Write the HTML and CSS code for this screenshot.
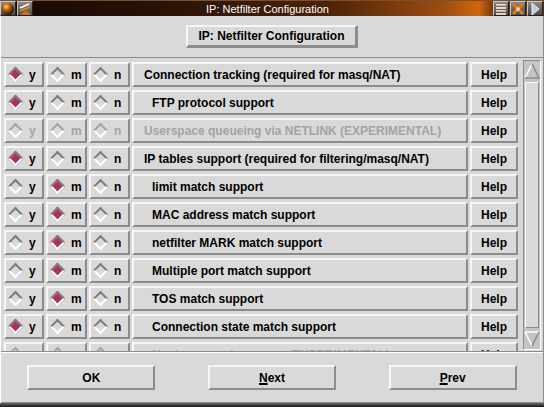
FILE: index.html
```html
<!DOCTYPE html>
<html lang="en">
<head>
  <meta charset="UTF-8" />
  <title>IP: Netfilter Configuration</title>
  <link rel="stylesheet" href="styles.css">
</head>
<body>
  <div class="window">
    <div class="titlebar">
      <span class="tb-btn">
        <svg width="14" height="14" viewBox="0 0 14 14">
          <defs>
            <radialGradient id="ball" cx="0.35" cy="0.3" r="0.7">
              <stop offset="0" stop-color="#ffd27a"/>
              <stop offset="0.35" stop-color="#d07010"/>
              <stop offset="1" stop-color="#2a1004"/>
            </radialGradient>
          </defs>
          <circle cx="7" cy="7" r="6" fill="url(#ball)"/>
        </svg>
      </span>
      <span class="tb-btn">
        <svg width="14" height="14" viewBox="0 0 14 14">
          <path d="M2 6 L11 2" stroke="#fff" stroke-width="1.5"/>
          <path d="M2 9 L12 5" stroke="#e08a20" stroke-width="1.5"/>
          <path d="M2 13 L8 8 L13 13 Z" fill="#d07010"/>
        </svg>
      </span>
      <span class="tb-title">IP: Netfilter Configuration</span>
      <span class="tb-btn">
        <svg width="14" height="14" viewBox="0 0 14 14">
          <path d="M2 3 H12 M2 6 H12 M2 9 H12 M2 12 H12" stroke="#fff" stroke-width="1.4"/>
          <path d="M2 4 H12 M2 10 H12" stroke="#c06010" stroke-width="0.8"/>
        </svg>
      </span>
      <span class="tb-btn">
        <svg width="14" height="14" viewBox="0 0 14 14">
          <path d="M2 2 L12 12 M12 2 L2 12" stroke="#e07818" stroke-width="3"/>
          <circle cx="7" cy="7" r="2" fill="#ffd080"/>
        </svg>
      </span>
      <span class="tb-btn">
        <svg width="14" height="14" viewBox="0 0 14 14">
          <path d="M4 1 L11 7 L4 13 Z" fill="#c8c8c8" stroke="#f4f4f4" stroke-width="1"/>
        </svg>
      </span>
    </div>

    <div class="client">
      <div class="header">
        <div class="tk-btn header-btn">IP: Netfilter Configuration</div>
      </div>

      <div class="list-area">
        <div class="rows">
          <div class="row">
            <div class="tk-btn radio"><span class="ind on"></span>y</div>
            <div class="tk-btn radio"><span class="ind"></span>m</div>
            <div class="tk-btn radio"><span class="ind"></span>n</div>
            <div class="tk-btn label">Connection tracking (required for masq/NAT)</div>
            <div class="tk-btn help">Help</div>
          </div>
          <div class="row">
            <div class="tk-btn radio"><span class="ind on"></span>y</div>
            <div class="tk-btn radio"><span class="ind"></span>m</div>
            <div class="tk-btn radio"><span class="ind"></span>n</div>
            <div class="tk-btn label sub">FTP protocol support</div>
            <div class="tk-btn help">Help</div>
          </div>
          <div class="row disabled">
            <div class="tk-btn radio"><span class="ind"></span>y</div>
            <div class="tk-btn radio"><span class="ind"></span>m</div>
            <div class="tk-btn radio"><span class="ind"></span>n</div>
            <div class="tk-btn label">Userspace queueing via NETLINK (EXPERIMENTAL)</div>
            <div class="tk-btn help">Help</div>
          </div>
          <div class="row">
            <div class="tk-btn radio"><span class="ind on"></span>y</div>
            <div class="tk-btn radio"><span class="ind"></span>m</div>
            <div class="tk-btn radio"><span class="ind"></span>n</div>
            <div class="tk-btn label">IP tables support (required for filtering/masq/NAT)</div>
            <div class="tk-btn help">Help</div>
          </div>
          <div class="row">
            <div class="tk-btn radio"><span class="ind"></span>y</div>
            <div class="tk-btn radio"><span class="ind on"></span>m</div>
            <div class="tk-btn radio"><span class="ind"></span>n</div>
            <div class="tk-btn label sub">limit match support</div>
            <div class="tk-btn help">Help</div>
          </div>
          <div class="row">
            <div class="tk-btn radio"><span class="ind"></span>y</div>
            <div class="tk-btn radio"><span class="ind on"></span>m</div>
            <div class="tk-btn radio"><span class="ind"></span>n</div>
            <div class="tk-btn label sub">MAC address match support</div>
            <div class="tk-btn help">Help</div>
          </div>
          <div class="row">
            <div class="tk-btn radio"><span class="ind"></span>y</div>
            <div class="tk-btn radio"><span class="ind on"></span>m</div>
            <div class="tk-btn radio"><span class="ind"></span>n</div>
            <div class="tk-btn label sub">netfilter MARK match support</div>
            <div class="tk-btn help">Help</div>
          </div>
          <div class="row">
            <div class="tk-btn radio"><span class="ind"></span>y</div>
            <div class="tk-btn radio"><span class="ind on"></span>m</div>
            <div class="tk-btn radio"><span class="ind"></span>n</div>
            <div class="tk-btn label sub">Multiple port match support</div>
            <div class="tk-btn help">Help</div>
          </div>
          <div class="row">
            <div class="tk-btn radio"><span class="ind"></span>y</div>
            <div class="tk-btn radio"><span class="ind on"></span>m</div>
            <div class="tk-btn radio"><span class="ind"></span>n</div>
            <div class="tk-btn label sub">TOS match support</div>
            <div class="tk-btn help">Help</div>
          </div>
          <div class="row">
            <div class="tk-btn radio"><span class="ind on"></span>y</div>
            <div class="tk-btn radio"><span class="ind"></span>m</div>
            <div class="tk-btn radio"><span class="ind"></span>n</div>
            <div class="tk-btn label sub">Connection state match support</div>
            <div class="tk-btn help">Help</div>
          </div>
          <div class="row disabled">
            <div class="tk-btn radio"><span class="ind"></span>y</div>
            <div class="tk-btn radio"><span class="ind"></span>m</div>
            <div class="tk-btn radio"><span class="ind"></span>n</div>
            <div class="tk-btn label sub">Unclean match support (EXPERIMENTAL)</div>
            <div class="tk-btn help">Help</div>
          </div>
        </div>

        <div class="scrollbar">
          <svg class="arrow" width="16" height="16" viewBox="0 0 16 16">
            <path d="M1 15 L8 1" stroke="#fff" stroke-width="1.5"/>
            <path d="M8 1 L15 15 L1 15" stroke="#8c8c8c" stroke-width="1.5" fill="none"/>
          </svg>
          <div class="slider"></div>
          <svg class="arrow" width="16" height="16" viewBox="0 0 16 16">
            <path d="M1 1 L15 1 M1 1 L8 15" stroke="#fff" stroke-width="1.5" fill="none"/>
            <path d="M8 15 L15 1" stroke="#8c8c8c" stroke-width="1.5"/>
          </svg>
        </div>
      </div>

      <div class="footer">
        <div class="tk-btn foot-btn">OK</div>
        <div class="tk-btn foot-btn"><u>N</u>ext</div>
        <div class="tk-btn foot-btn"><u>P</u>rev</div>
      </div>
    </div>
    <div class="bottom-frame"></div>
  </div>
</body>
</html>
```

FILE: styles.css
```css
body {
  margin: 0;
  font-family: "Liberation Sans", Arial, sans-serif;
  background: #d9d9d9;
}
.window {
  width: 544px;
  height: 407px;
  display: flex;
  flex-direction: column;
  overflow: hidden;
}
.titlebar {
  height: 16px;
  flex-shrink: 0;
  display: flex;
  align-items: center;
  background: linear-gradient(to right, #140804 0%, #2a1206 30%, #4a2208 60%, #a04e10 82%, #d0680e 88%, #6a300a 91%);
  border-top: 1px solid #7a5030;
  box-sizing: border-box;
}
.tb-btn {
  width: 16px;
  height: 15px;
  box-sizing: border-box;
  display: flex;
  align-items: center;
  justify-content: center;
  background: linear-gradient(#8a8a8a, #4a4a4a);
  border: 1px solid;
  border-color: #c8c8c8 #202020 #202020 #c8c8c8;
  margin-right: 1px;
}
.tb-title {
  flex: 1;
  text-align: center;
  color: #fff;
  font-size: 11px;
  padding-left: 8px;
}
.client {
  flex: 1;
  display: flex;
  flex-direction: column;
  background: #d9d9d9;
  border-left: 1px solid #fff;
  border-right: 1px solid #8c8c8c;
  min-height: 0;
}
.tk-btn {
  box-sizing: border-box;
  border: 2px solid;
  border-color: #f6f6f6 #8c8c8c #8c8c8c #f6f6f6;
  background: #d9d9d9;
  font-weight: bold;
  font-size: 12px;
  color: #000;
  display: flex;
  align-items: center;
}
.header {
  height: 42px;
  flex-shrink: 0;
  display: flex;
  align-items: center;
  justify-content: center;
  border-bottom: 1px solid #8c8c8c;
  box-sizing: border-box;
}
.header-btn {
  width: 172px;
  height: 23px;
  justify-content: center;
  border-right-width: 3px;
  border-bottom-width: 3px;
}
.list-area {
  height: 294px;
  flex-shrink: 0;
  display: flex;
  border-bottom: 1px solid #8c8c8c;
  box-sizing: border-box;
}
.rows {
  flex: 1;
  overflow: hidden;
  padding: 4px 0 0 3px;
  display: flex;
  flex-direction: column;
  gap: 3px;
}
.row {
  display: grid;
  grid-template-columns: 40px 41px 41px 336px 48px;
  column-gap: 2px;
  height: 25px;
  flex-shrink: 0;
}
.radio {
  padding-left: 3px;
  gap: 8px;
}
.ind {
  width: 11px;
  height: 11px;
  box-sizing: border-box;
  border: 2px solid;
  border-color: #7c7c7c #fff #fff #7c7c7c;
  background: #d9d9d9;
  transform: rotate(45deg);
  margin-left: 1px;
}
.ind.on {
  background: #b03060;
}
.label {
  padding-left: 10px;
}
.label.sub {
  padding-left: 18px;
}
.help {
  justify-content: center;
}
.disabled .tk-btn {
  color: #a3a3a3;
}
.disabled .ind {
  border-color: #a3a3a3 #fff #fff #a3a3a3;
}
.disabled .help {
  color: #000;
}
.scrollbar {
  width: 18px;
  margin: 2px 2px 1px 4px;
  box-sizing: border-box;
  border: 1px solid;
  border-color: #8c8c8c #fff #fff #8c8c8c;
  background: #c4c4c4;
  display: flex;
  flex-direction: column;
  align-items: center;
  padding: 2px 0;
}
.arrow {
  flex-shrink: 0;
}
.slider {
  flex: 1;
  width: 14px;
  box-sizing: border-box;
  margin: 3px 0 3px;
  border: 1px solid;
  border-color: #fff #8c8c8c #8c8c8c #fff;
  background: #d9d9d9;
}
.footer {
  flex: 1;
  display: grid;
  grid-template-columns: 1fr 1fr 1fr;
  align-items: center;
  justify-items: center;
  border-top: 1px solid #fff;
  border-bottom: 1px solid #8c8c8c;
}
.foot-btn {
  width: 128px;
  height: 25px;
  justify-content: center;
}
.foot-btn u {
  text-decoration-thickness: 2px;
}
.bottom-frame {
  height: 4px;
  flex-shrink: 0;
  background: linear-gradient(#6a6a6a, #181818);
}
```
